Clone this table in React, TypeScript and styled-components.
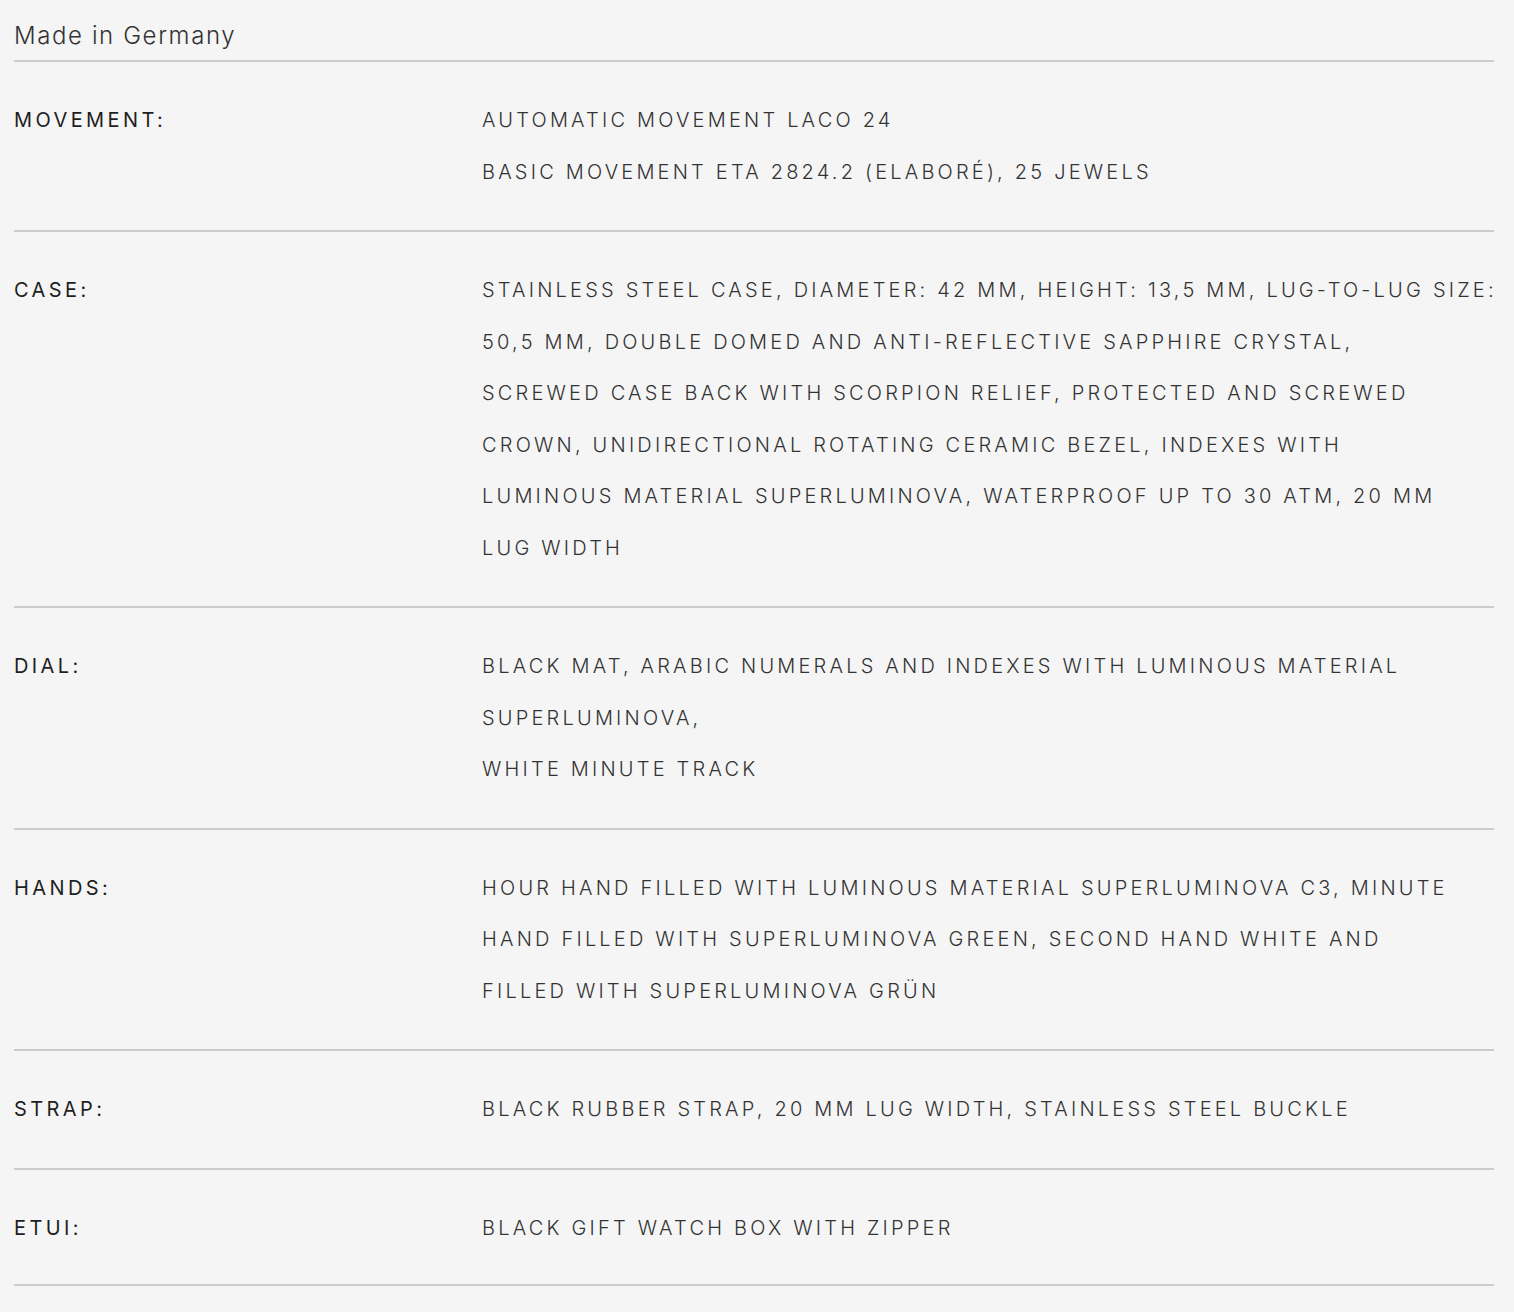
import React from "react";
import styled, { createGlobalStyle } from "styled-components";

const Global = createGlobalStyle`
  html, body { margin: 0; padding: 0; background: #f5f5f5; }
  body { font-family: Inter, "Noto Sans", sans-serif; color: #2b2b2b; }
`;

const Page = styled.div`
  padding: 0 20px 0 14px;
`;

const Origin = styled.div`
  font-size: 24px;
  font-weight: 300;
  line-height: 28px;
  padding: 22px 0 10px;
  color: #333;
  border-bottom: 2px solid #cbcbcb;
  letter-spacing: 1.6px;
`;

const Row = styled.div<{ $last?: boolean }>`
  display: grid;
  grid-template-columns: 468px 1fr;
  padding: 33px 0 ${(p) => (p.$last ? "30px" : "32px")};
  border-bottom: 2px solid #cbcbcb;
`;

const Label = styled.div`
  font-size: 20px;
  font-weight: 400;
  line-height: 51.5px;
  letter-spacing: 3.4px;
  text-transform: uppercase;
  color: #1f1f1f;
`;

const Value = styled.div`
  font-size: 20px;
  font-weight: 300;
  line-height: 51.5px;
  letter-spacing: 3.2px;
  color: #333;
`;

const Line = styled.div`
  white-space: nowrap;
`;

const specs: { label: string; lines: string[] }[] = [
  {
    label: "MOVEMENT:",
    lines: ["AUTOMATIC MOVEMENT LACO 24", "BASIC MOVEMENT ETA 2824.2 (ELABORÉ), 25 JEWELS"],
  },
  {
    label: "CASE:",
    lines: [
      "STAINLESS STEEL CASE, DIAMETER: 42 MM, HEIGHT: 13,5 MM, LUG-TO-LUG SIZE:",
      "50,5 MM, DOUBLE DOMED AND ANTI-REFLECTIVE SAPPHIRE CRYSTAL,",
      "SCREWED CASE BACK WITH SCORPION RELIEF, PROTECTED AND SCREWED",
      "CROWN, UNIDIRECTIONAL ROTATING CERAMIC BEZEL, INDEXES WITH",
      "LUMINOUS MATERIAL SUPERLUMINOVA, WATERPROOF UP TO 30 ATM, 20 MM",
      "LUG WIDTH",
    ],
  },
  {
    label: "DIAL:",
    lines: [
      "BLACK MAT, ARABIC NUMERALS AND INDEXES WITH LUMINOUS MATERIAL",
      "SUPERLUMINOVA,",
      "WHITE MINUTE TRACK",
    ],
  },
  {
    label: "HANDS:",
    lines: [
      "HOUR HAND FILLED WITH LUMINOUS MATERIAL SUPERLUMINOVA C3, MINUTE",
      "HAND FILLED WITH SUPERLUMINOVA GREEN, SECOND HAND WHITE AND",
      "FILLED WITH SUPERLUMINOVA GRÜN",
    ],
  },
  { label: "STRAP:", lines: ["BLACK RUBBER STRAP, 20 MM LUG WIDTH, STAINLESS STEEL BUCKLE"] },
  { label: "ETUI:", lines: ["BLACK GIFT WATCH BOX WITH ZIPPER"] },
];

export default function App() {
  return (
    <>
      <Global />
      <Page>
        <Origin>Made in Germany</Origin>
        {specs.map((s, idx) => (
          <Row key={s.label} $last={idx === specs.length - 1}>
            <Label>{s.label}</Label>
            <Value>
              {s.lines.map((l, i) => (
                <Line key={i}>{l}</Line>
              ))}
            </Value>
          </Row>
        ))}
      </Page>
    </>
  );
}
